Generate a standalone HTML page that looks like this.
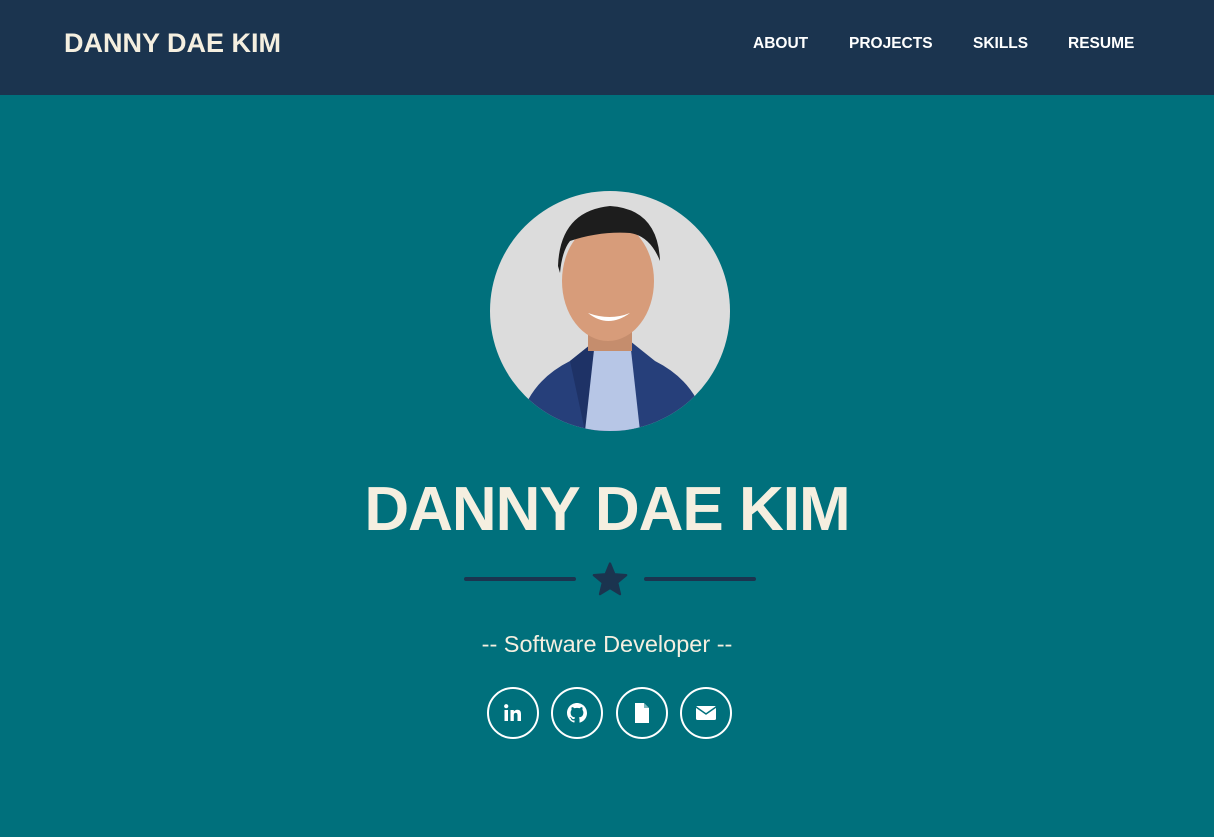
<!DOCTYPE html>
<html><head><style>
body{margin:0;width:1214px;height:837px;background:#00707c;font-family:"Liberation Sans",sans-serif;overflow:hidden;position:relative}
.nav{position:absolute;left:0;top:0;width:1214px;height:95px;background:#1b344f}
.logo{position:absolute;left:64px;top:28px;font-size:27px;font-weight:bold;color:#f5efe0;white-space:nowrap}
.nl{position:absolute;top:35px;font-size:15.5px;font-weight:bold;color:#fff}
.photo{position:absolute;left:490px;top:191px;width:240px;height:240px;border-radius:50%;overflow:hidden;background:#dcdcdc}
h1{position:absolute;left:0;width:1214px;top:473px;margin:0;text-align:center;font-size:62px;font-weight:bold;color:#f5efe0;line-height:74px;letter-spacing:-1px}
.line{position:absolute;top:577px;width:112px;height:4px;border-radius:2px;background:#1b344f}
.sub{position:absolute;left:0;width:1214px;top:631px;text-align:center;font-size:23.5px;color:#f5efe0}
.ic{position:absolute;top:687px;width:48px;height:48px;border:2px solid #fff;border-radius:50%;display:flex;align-items:center;justify-content:center}
</style></head><body>
<div class="nav">
<div class="logo">DANNY DAE KIM</div>
<div class="nl" style="left:753px">ABOUT</div>
<div class="nl" style="left:849px">PROJECTS</div>
<div class="nl" style="left:973px">SKILLS</div>
<div class="nl" style="left:1068px">RESUME</div>
</div>
<div class="photo">
<svg width="240" height="240" viewBox="0 0 240 240">
<path d="M30 230 Q40 190 80 170 L105 150 L140 150 L165 170 Q205 190 215 230 L215 240 L30 240Z" fill="#263f7a"/>
<path d="M80 170 L105 150 L120 240 L95 240Z" fill="#1e3266"/>
<path d="M105 150 L140 150 L150 240 L95 240Z" fill="#b7c6e6"/>
<rect x="98" y="120" width="44" height="40" fill="#c58d6d"/>
<ellipse cx="118" cy="90" rx="46" ry="60" fill="#d79c7a"/>
<path d="M68 75 Q70 20 120 15 Q168 18 170 70 Q160 45 140 42 Q110 40 80 50 Q72 60 70 82Z" fill="#1d1d1d"/>
<path d="M98 122 Q118 138 140 122 Q120 130 98 122Z" fill="#fff"/>
</svg>
</div>
<h1>DANNY DAE KIM</h1>
<div class="line" style="left:464px"></div>
<div class="line" style="left:644px"></div>
<svg style="position:absolute;left:592px;top:562px" width="36" height="34" viewBox="0 0 24 23"><path d="M12 1 L15 8.3 L23 8.9 L16.9 14 L18.8 21.8 L12 17.6 L5.2 21.8 L7.1 14 L1 8.9 L9 8.3Z" fill="#1b344f" stroke="#1b344f" stroke-width="1.5" stroke-linejoin="round"/></svg>
<div class="sub">-- Software Developer --</div>
<div class="ic" style="left:487px"><svg width="20" height="20" viewBox="0 0 20 20"><rect x="1.5" y="7" width="3.5" height="11" fill="#fff"/><circle cx="3.2" cy="3.2" r="2.1" fill="#fff"/><path d="M7.5 7h3.3v1.6c.6-1 1.8-1.9 3.6-1.9 3 0 3.6 2 3.6 4.5V18h-3.5v-5.3c0-1.3-.1-2.8-1.8-2.8s-1.9 1.3-1.9 2.7V18H7.5z" fill="#fff"/></svg></div>
<div class="ic" style="left:551px"><svg width="20" height="20" viewBox="0 0 16 16"><path fill="#fff" d="M8 0C3.58 0 0 3.580 0 8c0 3.54 2.29 6.53 5.470 7.59.4.07.55-.17.55-.38v-1.33c-2.23.49-2.7-1.07-2.7-1.07-.36-.92-.89-1.170-.89-1.17-.73-.5.05-.49.05-.49.8.06 1.23.83 1.230.83.72 1.23 1.87.87 2.33.67.07-.52.28-.87.5-1.07-1.78-.2-3.64-.89-3.64-3.95 0-.87.31-1.59.82-2.15-.08-.2-.36-1.02.08-2.12 0 0 .67-.21 2.2.82a7.6 7.6 0 0 1 4 0c1.53-1.04 2.2-.82 2.2-.82.44 1.1.16 1.92.08 2.12.51.56.82 1.27.82 2.15 0 3.07-1.87 3.75-3.65 3.95.29.25.54.73.54 1.48v2.2c0 .21.15.46.55.38A8 8 0 0 0 16 8c0-4.42-3.58-8-8-8z"/></svg></div>
<div class="ic" style="left:616px"><svg width="16" height="20" viewBox="0 0 16 20"><path d="M1 0h9l5 5v15H1z" fill="#fff"/><path d="M10 0v5h5" fill="#00707c" opacity=".5"/></svg></div>
<div class="ic" style="left:680px"><svg width="22" height="16" viewBox="0 0 22 16"><rect x="1" y="1" width="20" height="14" rx="1.5" fill="#fff"/><path d="M1 2 L11 9 L21 2" stroke="#00707c" stroke-width="1.5" fill="none"/></svg></div>
</body></html>
